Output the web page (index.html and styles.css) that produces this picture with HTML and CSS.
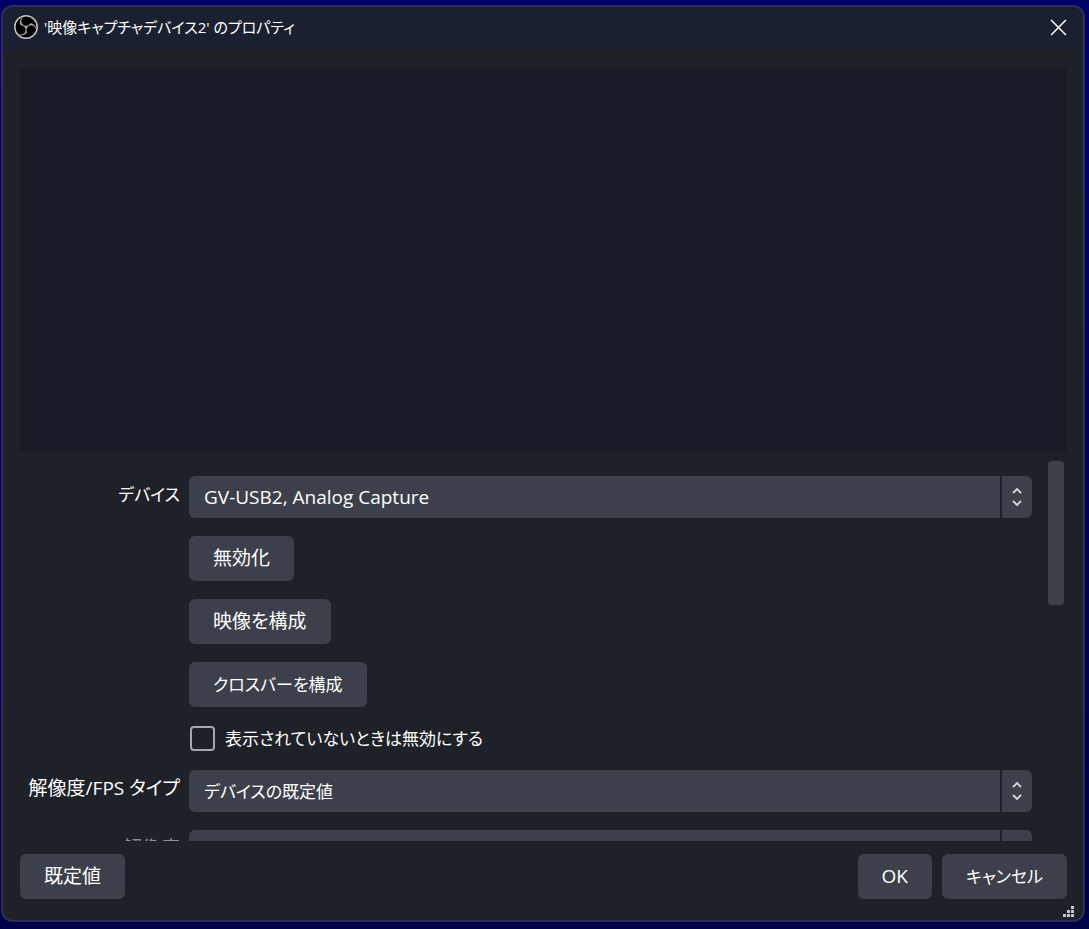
FILE: index.html
```html
<!DOCTYPE html>
<html lang="ja">
<head>
<meta charset="utf-8">
<title>'映像キャプチャデバイス2' のプロパティ</title>
<link rel="stylesheet" href="styles.css">
</head>
<body>
<main class="dialog">
  <header class="titlebar">
    <svg class="logo" viewBox="0 0 24 24" aria-hidden="true">
      <circle cx="12" cy="12" r="11.2" fill="#000" stroke="#c4c4c6" stroke-width="1.5"/>
      <path fill="#b4b4b6" stroke="#b4b4b6" stroke-width=".4" d="M6.182 5.99c.352-1.698 1.503-3.229 3.05-3.996-.269.273-.595.483-.844.78-1.02 1.1-1.48 2.692-1.199 4.156.355 2.235 2.455 4.06 4.732 4.028 1.765.079 3.485-.937 4.348-2.468 1.848.063 3.645 1.017 4.7 2.548.54.799.962 1.736.991 2.711-.342-1.295-1.202-2.446-2.375-3.095-1.135-.639-2.529-.802-3.772-.425-1.56.448-2.849 1.723-3.293 3.293-.377 1.25-.216 2.628.377 3.772-.825 1.429-2.315 2.449-3.932 2.756-1.244.261-2.551.059-3.709-.464 1.036.302 2.161.355 3.191-.011 1.381-.457 2.522-1.567 3.024-2.935.556-1.49.345-3.261-.591-4.54-.7-1.007-1.803-1.717-3.002-1.969-.38-.068-.764-.098-1.148-.134-.611-1.231-.834-2.66-.528-3.996z"/>
    </svg>
    <h1 class="title">'映像キャプチャデバイス2' のプロパティ</h1>
    <button class="close" type="button" aria-label="閉じる">
      <svg viewBox="0 0 16 16" aria-hidden="true"><path d="M1 1l14 14M15 1L1 15"/></svg>
    </button>
  </header>
  <div class="content">
    <div class="preview"></div>
    <div class="scroll-area">
      <form class="form">
        <label class="label kana" for="device">デバイス</label>
        <div class="combo">
          <select id="device"><option>GV-USB2, Analog Capture</option></select>
          <span class="arrows"><svg viewBox="0 0 12 20" aria-hidden="true"><path d="M2 6l4-4 4 4M2 14l4 4 4-4"/></svg></span>
        </div>
        <button class="button field" type="button">無効化</button>
        <button class="button field" type="button">映像を構成</button>
        <button class="button field kana" type="button">クロスバーを構成</button>
        <div class="check field kana">
          <input type="checkbox" id="deactivate">
          <label for="deactivate">表示されていないときは無効にする</label>
        </div>
        <label class="label" for="restype">解像度/FPS タイプ</label>
        <div class="combo">
          <select class="kana" id="restype"><option>デバイスの既定値</option></select>
          <span class="arrows"><svg viewBox="0 0 12 20" aria-hidden="true"><path d="M2 6l4-4 4 4M2 14l4 4 4-4"/></svg></span>
        </div>
        <label class="label disabled" for="resolution">解像度</label>
        <div class="combo">
          <select id="resolution" disabled><option></option></select>
          <span class="arrows"></span>
        </div>
      </form>
      <div class="scrollbar"><div class="thumb"></div></div>
    </div>
    <footer class="footer">
      <button class="button" type="button">既定値</button>
      <div class="actions">
        <button class="button" type="button">OK</button>
        <button class="button kana" type="button">キャンセル</button>
      </div>
    </footer>
  </div>
  <svg class="grip" viewBox="0 0 11 11" aria-hidden="true"><path d="M8 0h3v3H8zM4 4h3v3H4zM8 4h3v3H8zM0 8h3v3H0zM4 8h3v3H4zM8 8h3v3H8z"/></svg>
</main>
</body>
</html>
```

FILE: styles.css
```css
* { box-sizing: border-box; }

body {
  margin: 0;
  height: 100vh;
  padding: 5px 4px 7px 1px;
  display: flex;
  background: linear-gradient(#000068, #000048);
  color: #fff;
  font: 400 19px/27px "Open Sans", "Noto Sans CJK JP", sans-serif;
  font-feature-settings: "palt";
}

button, select {
  margin: 0;
  border: 0;
  color: inherit;
  font: inherit;
  font-feature-settings: inherit;
}

.dialog {
  position: relative;
  flex: 1;
  min-width: 0;
  display: flex;
  flex-direction: column;
  overflow: hidden;
  border: 2px solid #2d2e59;
  border-radius: 12px;
  background: #1f2129;
}

.titlebar {
  display: flex;
  align-items: center;
  gap: 6px;
  height: 43px;
  padding: 0 16px 3px 11px;
  background: #1b2030;
}

.logo { width: 24px; height: 24px; }

.title {
  flex: 1;
  margin: 0;
  font-size: 15px;
  font-weight: 400;
}

.close { padding: 0; background: none; }

.close svg {
  display: block;
  width: 17px;
  height: 17px;
  fill: none;
  stroke: #fff;
  stroke-width: 1.4;
}

.content {
  flex: 1;
  min-height: 0;
  display: flex;
  flex-direction: column;
  padding: 17px 16px 21px 17px;
}

.preview {
  flex: 384 1 0;
  background: #191b26;
}

.scroll-area {
  flex: 380 1 0;
  min-height: 0;
  display: flex;
  gap: 16px;
  margin: 10px 3px 13px 0;
  overflow: hidden;
}

.form {
  flex: 1;
  display: grid;
  grid-template-columns: 160px 1fr;
  gap: 18px 9px;
  align-content: start;
  padding-top: 15px;
}

.label {
  align-self: center;
  padding-bottom: 6px;
  text-align: right;
  white-space: nowrap;
}

.disabled { color: #8f9094; }

.field { grid-column: 2; justify-self: start; }

.combo { display: flex; gap: 2px; height: 42px; }

.combo select {
  flex: 1;
  min-width: 0;
  padding: 0 15px;
  appearance: none;
  border-radius: 6px 0 0 6px;
  background: #3c404b;
  opacity: 1;
}

.arrows {
  display: grid;
  place-items: center;
  width: 30px;
  border-radius: 0 6px 6px 0;
  background: #3c404b;
}

.arrows svg {
  width: 12px;
  height: 20px;
  fill: none;
  stroke: #d6d6d8;
  stroke-width: 1.8;
}

.button {
  height: 45px;
  padding: 0 24px;
  border-radius: 6px;
  background: #3c404b;
}

.field.kana, .label.kana, .button.kana, .combo .kana { font-size: 17px; }

.check { display: flex; align-items: center; gap: 10px; padding-left: 1px; }

.check input {
  width: 25px;
  height: 25px;
  margin: 0;
  appearance: none;
  border: 2px solid #a8a8ac;
  border-radius: 4px;
}

.scrollbar { width: 16px; }

.thumb {
  height: 38%;
  border-radius: 3px;
  background: #3c404b;
}

.footer { display: flex; justify-content: space-between; }

.actions { display: flex; gap: 10px; }

.grip {
  position: absolute;
  right: 9px;
  bottom: 3px;
  width: 11px;
  height: 11px;
  fill: #c8c8ca;
}
```
